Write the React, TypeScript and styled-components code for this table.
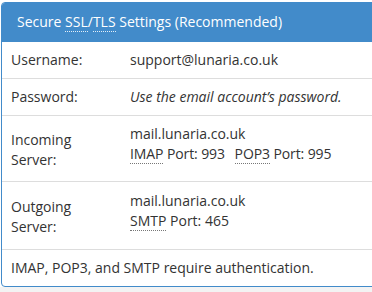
import React, { FC } from 'react';
import styled, { createGlobalStyle } from 'styled-components';

const GlobalStyle = createGlobalStyle`
  html, body {
    margin: 0;
    padding: 0;
    background: #ffffff;
  }

  body {
    font-family: "Open Sans", "Liberation Sans", sans-serif;
    font-size: 14px;
    line-height: 20px;
    color: #333333;
  }
`;

const Page = styled.div`
  width: 372px;
  height: 292px;
  overflow: hidden;
  display: flex;
  flex-direction: column;
  background: #ffffff;
`;

const Holder = styled.div`
  padding: 2px 0 0 1px;
`;

const Panel = styled.div`
  width: 440px;
  border: 1px solid #428bca;
  border-radius: 4px;
  background: #ffffff;
  overflow: hidden;
`;

const Heading = styled.div`
  background: #428bca;
  color: #ffffff;
  padding: 9px 15px 10px;
  font-size: 14px;
  line-height: 20px;
`;

const Abbr = styled.abbr<{ $light?: boolean }>`
  text-decoration: none;
  border-bottom: 1px dotted ${(p) => (p.$light ? 'rgba(255,255,255,0.85)' : '#777777')};
  cursor: help;
`;

const Row = styled.div<{ $top?: number; $first?: boolean }>`
  display: grid;
  grid-template-columns: 119px 1fr;
  align-items: start;
  padding: ${(p) => p.$top ?? 8}px 9px 8px;
  border-top: ${(p) => (p.$first ? 'none' : '1px solid #dddddd')};
`;

const Label = styled.div<{ $offset?: number }>`
  margin-top: ${(p) => p.$offset ?? 0}px;
`;

const Value = styled.div<{ $gap?: number }>`
  margin-bottom: ${(p) => p.$gap ?? 0}px;
`;

const Hint = styled.span`
  font-style: italic;
`;

const Port = styled.span`
  margin-right: 6px;
  letter-spacing: -0.1px;
`;

const Note = styled.div`
  padding: 8px 9px;
  border-top: 1px solid #dddddd;
`;

const Below = styled.div`
  flex: 1;
  background: #f3f3f3;
`;

const App: FC = () => {
  return (
    <>
      <GlobalStyle />
      <Page>
        <Holder>
          <Panel>
            <Heading>
              Secure <Abbr $light title="Secure Sockets Layer">SSL</Abbr>/
              <Abbr $light title="Transport Layer Security">TLS</Abbr> Settings (Recommended)
            </Heading>
            <Row $first>
              <Label>Username:</Label>
              <Value>support@lunaria.co.uk</Value>
            </Row>
            <Row>
              <Label>Password:</Label>
              <Value>
                <Hint>Use the email account’s password.</Hint>
              </Value>
            </Row>
            <Row>
              <Label $offset={6}>
                Incoming
                <br />
                Server:
              </Label>
              <Value $gap={9}>
                mail.lunaria.co.uk
                <br />
                <Port>
                  <Abbr title="Internet Message Access Protocol">IMAP</Abbr> Port: 993
                </Port>{' '}
                <Port>
                  <Abbr title="Post Office Protocol v3">POP3</Abbr> Port: 995
                </Port>
              </Value>
            </Row>
            <Row $top={9}>
              <Label $offset={6}>
                Outgoing
                <br />
                Server:
              </Label>
              <Value $gap={10}>
                mail.lunaria.co.uk
                <br />
                <Abbr title="Simple Mail Transfer Protocol">SMTP</Abbr> Port: 465
              </Value>
            </Row>
            <Note>IMAP, POP3, and SMTP require authentication.</Note>
          </Panel>
        </Holder>
        <Below />
      </Page>
    </>
  );
};

export default App;
